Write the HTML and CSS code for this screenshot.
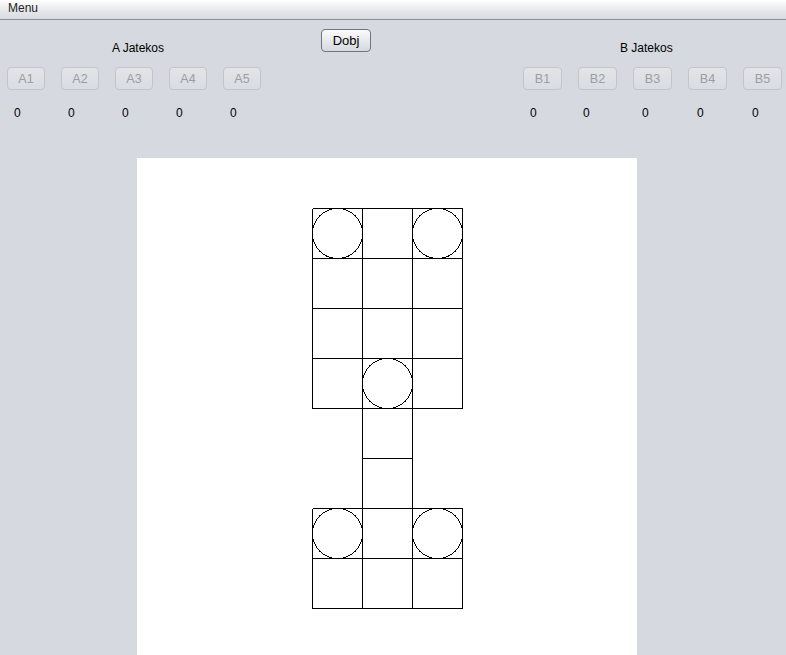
FILE: index.html
```html
<!DOCTYPE html>
<html>
<head>
<meta charset="utf-8">
<link rel="stylesheet" href="styles.css">
</head>
<body>
<div class="menubar"><span class="menu-item">Menu</span></div>
<div class="top">
  <div class="player player-a">
    <div class="title">A Jatekos</div>
    <div class="btns">
      <button class="pbtn" disabled>A1</button>
      <button class="pbtn" disabled>A2</button>
      <button class="pbtn" disabled>A3</button>
      <button class="pbtn" disabled>A4</button>
      <button class="pbtn" disabled>A5</button>
    </div>
    <div class="scores">
      <span>0</span><span>0</span><span>0</span><span>0</span><span>0</span>
    </div>
  </div>
  <div class="center">
    <button class="dobj">Dobj</button>
  </div>
  <div class="player player-b">
    <div class="title">B Jatekos</div>
    <div class="btns">
      <button class="pbtn" disabled>B1</button>
      <button class="pbtn" disabled>B2</button>
      <button class="pbtn" disabled>B3</button>
      <button class="pbtn" disabled>B4</button>
      <button class="pbtn" disabled>B5</button>
    </div>
    <div class="scores">
      <span>0</span><span>0</span><span>0</span><span>0</span><span>0</span>
    </div>
  </div>
</div>
<div class="board-wrap">
  <div class="board">
    <svg width="500" height="497" viewBox="0 0 500 497" shape-rendering="crispEdges">
      <g fill="none" stroke="#000" stroke-width="1">
        <path d="M175.5 50.5H325.5 M175.5 100.5H325.5 M175.5 150.5H325.5 M175.5 200.5H325.5 M175.5 250.5H325.5"/>
        <path d="M175.5 50.5V250.5 M225.5 50.5V250.5 M275.5 50.5V250.5 M325.5 50.5V250.5"/>
        <path d="M225.5 250.5V350.5 M275.5 250.5V350.5 M225.5 300.5H275.5"/>
        <path d="M175.5 350.5H325.5 M175.5 400.5H325.5 M175.5 450.5H325.5"/>
        <path d="M175.5 350.5V450.5 M225.5 350.5V450.5 M275.5 350.5V450.5 M325.5 350.5V450.5"/>
        <circle cx="200.5" cy="75.5" r="25"/>
        <circle cx="300.5" cy="75.5" r="25"/>
        <circle cx="250.5" cy="225.5" r="25"/>
        <circle cx="200.5" cy="375.5" r="25"/>
        <circle cx="300.5" cy="375.5" r="25"/>
      </g>
    </svg>
  </div>
</div>
</body>
</html>
```

FILE: styles.css
```css
html, body {
  margin: 0;
  padding: 0;
}
body {
  background: #d6d9df;
  font-family: "Liberation Sans", Arial, sans-serif;
  font-size: 12px;
  color: #000;
  width: 786px;
  height: 655px;
  overflow: hidden;
}
.menubar {
  height: 19px;
  border-bottom: 1px solid #8e9094;
  background: linear-gradient(#ffffff, #e4e6ea 60%, #d8dbe0);
  display: flex;
  align-items: center;
}
.menu-item {
  padding-left: 8px;
  color: #222;
  line-height: 16px;
  margin-top: -3px;
}
.top {
  display: flex;
  height: 138px;
}
.player {
  display: flex;
  flex-direction: column;
}
.player-a {
  width: 321px;
  padding-left: 7px;
  box-sizing: border-box;
}
.player-b {
  margin-left: 152px;
}
.title {
  margin-top: 21px;
  line-height: 14px;
  height: 14px;
}
.player-a .title { padding-left: 105px; }
.player-b .title { padding-left: 97px; }
.btns {
  display: flex;
  gap: 16px;
  margin-top: 12px;
}
.pbtn {
  width: 38px;
  height: 23px;
  padding: 0;
  border: 1px solid #c2c5cb;
  border-radius: 4px;
  background: linear-gradient(#e2e4e8, #d9dce1);
  color: #9a9ea4;
  font-family: "Liberation Sans", Arial, sans-serif;
  font-size: 12.5px;
}
.player-b .pbtn { width: 39px; }
.scores {
  display: flex;
  gap: 16px;
  margin-top: 16px;
  line-height: 14px;
}
.scores span {
  width: 31px;
  padding-left: 7px;
}
.player-b .scores span { width: 30px; padding-left: 9px; }
.player-b .scores span:nth-child(1) { padding-left: 7px; width: 32px; }
.player-b .scores span:nth-child(2) { padding-left: 5px; width: 34px; }
.center {
  width: 50px;
  padding-top: 9px;
}
.dobj {
  width: 50px;
  height: 23px;
  padding: 0;
  border: 1px solid #6f7580;
  border-radius: 4px;
  background: linear-gradient(#fbfbfc, #e6e8eb 55%, #d6d9de);
  color: #000;
  font-family: "Liberation Sans", Arial, sans-serif;
  font-size: 13px;
}
.board-wrap {
  display: flex;
  padding-left: 137px;
}
.board {
  width: 500px;
  height: 497px;
  background: #fff;
}
.board svg {
  display: block;
}
```
